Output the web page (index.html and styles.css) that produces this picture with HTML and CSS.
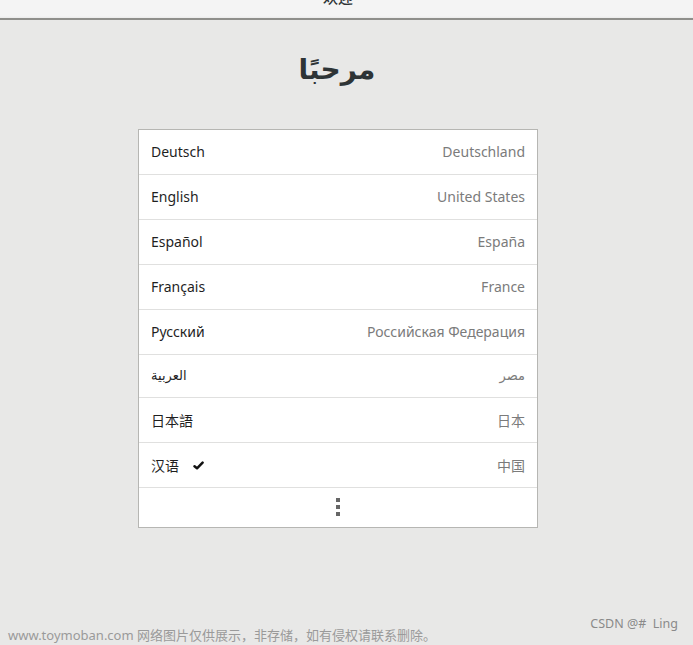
FILE: index.html
```html
<!DOCTYPE html>
<html lang="zh">
<head>
<meta charset="utf-8">
<link rel="stylesheet" href="styles.css">
</head>
<body>
<header class="topbar"><span class="topbar-title">欢迎</span></header>
<main class="page">
  <h1 class="welcome" dir="rtl">مرحبًا</h1>
  <ul class="langs">
    <li class="row"><span class="lang">Deutsch</span><span class="region">Deutschland</span></li>
    <li class="row"><span class="lang">English</span><span class="region">United States</span></li>
    <li class="row"><span class="lang">Español</span><span class="region">España</span></li>
    <li class="row"><span class="lang">Français</span><span class="region">France</span></li>
    <li class="row"><span class="lang">Русский</span><span class="region">Российская Федерация</span></li>
    <li class="row row-ar"><span class="lang ar">العربية</span><span class="region ar">مصر</span></li>
    <li class="row"><span class="lang cjk">日本語</span><span class="region cjk">日本</span></li>
    <li class="row"><span class="lang cjk">汉语 <svg class="check" width="11" height="9" viewBox="0 0 11 9"><path d="M1.5 5.3 L4 7.3 L9.6 1.6" fill="none" stroke="#111" stroke-width="2.5" stroke-linecap="round" stroke-linejoin="round"/></svg></span><span class="region cjk">中国</span></li>
    <li class="row more"><span class="dots"><i></i><i></i><i></i></span></li>
  </ul>
</main>
<footer class="foot">
  <span class="wm">www.toymoban.com 网络图片仅供展示，非存储，如有侵权请联系删除。</span>
  <span class="csdn">CSDN @#&nbsp; Ling</span>
</footer>
</body>
</html>
```
FILE: styles.css
```css
html, body {
  margin: 0;
  padding: 0;
}
body {
  width: 693px;
  height: 645px;
  background: #e8e8e7;
  font-family: "Noto Sans", "DejaVu Sans", "Noto Sans CJK SC", sans-serif;
  position: relative;
  overflow: hidden;
}
.topbar {
  width: 676px;
  height: 18px;
  padding-right: 17px;
  background: linear-gradient(#f4f4f4 0, #f4f4f4 16px, #ebebea 18px);
  border-bottom: 2px solid #8f8f8b;
  display: flex;
  justify-content: center;
  overflow: hidden;
}
.topbar-title {
  font-family: "Noto Sans CJK SC", sans-serif;
  font-size: 15px;
  font-weight: 500;
  color: #2e3436;
  line-height: 15px;
  margin-top: -11px;
}
.page {
  width: 676px;
  display: flex;
  flex-direction: column;
  align-items: center;
}
.welcome {
  margin: 31px 0 0 -2px;
  height: 78px;
  font-family: "DejaVu Sans", sans-serif;
  font-size: 28px;
  font-weight: bold;
  color: #2e3436;
  line-height: 38px;
}
.langs {
  list-style: none;
  margin: 0;
  padding: 0;
  width: 398px;
  background: #fff;
  border: 1px solid #b6b6b3;
}
.row {
  height: 44px;
  display: flex;
  align-items: center;
  justify-content: space-between;
  padding: 0 12px;
  border-bottom: 1px solid #e0e0df;
  font-size: 14px;
  line-height: 18px;
}
.row > span {
  margin-top: -1px;
}
.row-ar {
  height: 42px;
}
.lang {
  color: #1f1f1f;
  display: flex;
  align-items: center;
}
.region {
  color: #7b7b7b;
}
.ar {
  font-family: "DejaVu Sans", sans-serif;
  font-size: 13px;
}
.cjk {
  font-family: "Noto Sans CJK SC", sans-serif;
  font-size: 14px;
}
.check {
  margin-left: 14px;
  margin-top: 1px;
}
.more {
  height: 39px;
  border-bottom: none;
  justify-content: center;
}
.dots {
  display: flex;
  flex-direction: column;
  gap: 3px;
}
.dots i {
  display: block;
  width: 4px;
  height: 4px;
  background: #666;
}
.foot {
  position: absolute;
  left: 0;
  right: 0;
  bottom: 0;
  height: 30px;
}
.wm {
  position: absolute;
  left: 8px;
  bottom: 1px;
  font-family: "Noto Sans", "Noto Sans CJK SC", sans-serif;
  font-size: 13px;
  color: #9a9a9a;
}
.csdn {
  position: absolute;
  right: 15px;
  top: 0;
  font-family: "Noto Sans", sans-serif;
  font-size: 12.5px;
  color: #8a8a8a;
}
```
